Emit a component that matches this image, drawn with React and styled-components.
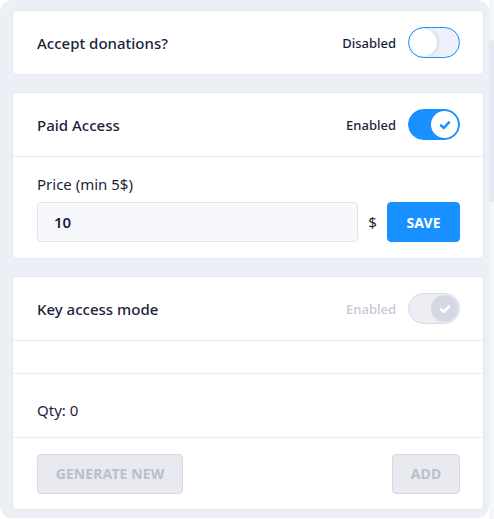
import React from 'react'
import styled, { createGlobalStyle } from 'styled-components'

const GlobalStyle = createGlobalStyle`
  html, body {
    margin: 0;
    padding: 0;
    background: #ffffff;
  }
  body {
    font-family: "Noto Sans", "Open Sans", sans-serif;
    color: #1b1f3b;
  }
`

const Page = styled.div`
  display: flex;
  width: 494px;
  height: 519px;
`

const Panel = styled.div`
  flex: 0 0 489px;
  box-sizing: border-box;
  height: 518px;
  padding: 10px 5px 9px 12px;
  background: #eceff6;
  border-radius: 12px;
  display: flex;
  flex-direction: column;
  gap: 17px;
`

const Track = styled.div`
  flex: 1;
  display: flex;
  flex-direction: column;
  background: #f4f6fa;
`

const Thumb = styled.div`
  margin-top: ${p => p.top}px;
  height: ${p => p.size}px;
  background: #e6e9f1;
  border-radius: 2px;
`

const Card = styled.div`
  background: #ffffff;
  border: 1px solid #e2e6ee;
  border-radius: 4px;
  display: flex;
  flex-direction: column;
`

const Row = styled.div`
  box-sizing: border-box;
  height: ${p => p.height || 63}px;
  padding: ${p => p.shift || 0}px 23px 0 24px;
  display: flex;
  align-items: center;
  justify-content: space-between;
  & + & {
    border-top: 1px solid #e8ecf3;
  }
`

const Title = styled.div`
  font-size: 15px;
  font-weight: 500;
  color: #1b1f3b;
`

const SwitchGroup = styled.div`
  display: flex;
  align-items: center;
  gap: 12px;
`

const State = styled.span`
  font-size: 13px;
  font-weight: 500;
  color: ${p => (p.muted ? '#c3c9d6' : '#1b1f3b')};
`

const Toggle = styled.div`
  box-sizing: border-box;
  width: 52px;
  height: 31px;
  border-radius: 16px;
  padding: 1px;
  display: flex;
  justify-content: ${p => (p.on ? 'flex-end' : 'flex-start')};
  align-items: center;
  background: ${p => (p.disabled ? '#eceef3' : p.on ? '#1890ff' : '#eef1fb')};
  border: 1px solid ${p => (p.disabled ? '#d6dae3' : '#1890ff')};
`

const Knob = styled.div`
  width: 27px;
  height: 27px;
  border-radius: 50%;
  display: flex;
  align-items: center;
  justify-content: center;
  background: ${p => (p.disabled ? '#d3d8e2' : '#ffffff')};
  box-shadow: ${p => (p.on ? 'none' : '2px 0 3px rgba(30, 40, 80, 0.10)')};
`

const Body = styled.div`
  padding: 18px 23px 16px 24px;
  border-top: 1px solid #e8ecf3;
  display: flex;
  flex-direction: column;
  gap: 8px;
`

const Label = styled.div`
  font-size: 15px;
  line-height: 19px;
  color: #1b1f3b;
`

const PriceLine = styled.div`
  display: flex;
  align-items: center;
`

const Input = styled.div`
  box-sizing: border-box;
  flex: 1;
  height: 40px;
  padding: 0 16px;
  display: flex;
  align-items: center;
  background: #f7f8fc;
  border: 1px solid #e1e5ee;
  border-radius: 4px;
  font-size: 15px;
  font-weight: 600;
`

const Currency = styled.span`
  width: 29px;
  text-align: center;
  font-size: 15px;
`

const Button = styled.button`
  box-sizing: border-box;
  height: 40px;
  width: ${p => p.width}px;
  border-radius: 4px;
  font-family: "Noto Sans", "Open Sans", sans-serif;
  font-size: 14px;
  font-weight: 700;
  letter-spacing: 0.1px;
  color: ${p => (p.disabled ? '#b8bfcd' : '#ffffff')};
  background: ${p => (p.disabled ? '#e8eaf0' : '#1890ff')};
  border: 1px solid ${p => (p.disabled ? '#d5d9e2' : '#1890ff')};
  padding: 0;
`

const Text = styled.div`
  font-size: 15px;
  color: #1b1f3b;
`

const Check = ({ color }) => (
  <svg width="14" height="14" viewBox="0 0 14 14" fill="none">
    <path d="M3 7.3 5.8 10 11 4.3" stroke={color} strokeWidth="2.5" strokeLinecap="round" strokeLinejoin="round" />
  </svg>
)

const Switch = ({ on, disabled }) => (
  <Toggle on={on} disabled={disabled}>
    <Knob on={on} disabled={disabled}>
      {on && <Check color={disabled ? '#ffffff' : '#1890ff'} />}
    </Knob>
  </Toggle>
)

export default function App() {
  return (
    <Page>
      <GlobalStyle />
      <Panel>
        <Card>
          <Row>
            <Title>Accept donations?</Title>
            <SwitchGroup>
              <State>Disabled</State>
              <Switch />
            </SwitchGroup>
          </Row>
        </Card>

        <Card>
          <Row>
            <Title>Paid Access</Title>
            <SwitchGroup>
              <State>Enabled</State>
              <Switch on />
            </SwitchGroup>
          </Row>
          <Body>
            <Label>Price (min 5$)</Label>
            <PriceLine>
              <Input>10</Input>
              <Currency>$</Currency>
              <Button width={73}>SAVE</Button>
            </PriceLine>
          </Body>
        </Card>

        <Card>
          <Row>
            <Title>Key access mode</Title>
            <SwitchGroup>
              <State muted>Enabled</State>
              <Switch on disabled />
            </SwitchGroup>
          </Row>
          <Row height={33} />
          <Row height={64} shift={8}>
            <Text>Qty: 0</Text>
          </Row>
          <Row height={72}>
            <Button disabled width={146}>GENERATE NEW</Button>
            <Button disabled width={68}>ADD</Button>
          </Row>
        </Card>
      </Panel>
      <Track>
        <Thumb top={40} size={162} />
      </Track>
    </Page>
  )
}
